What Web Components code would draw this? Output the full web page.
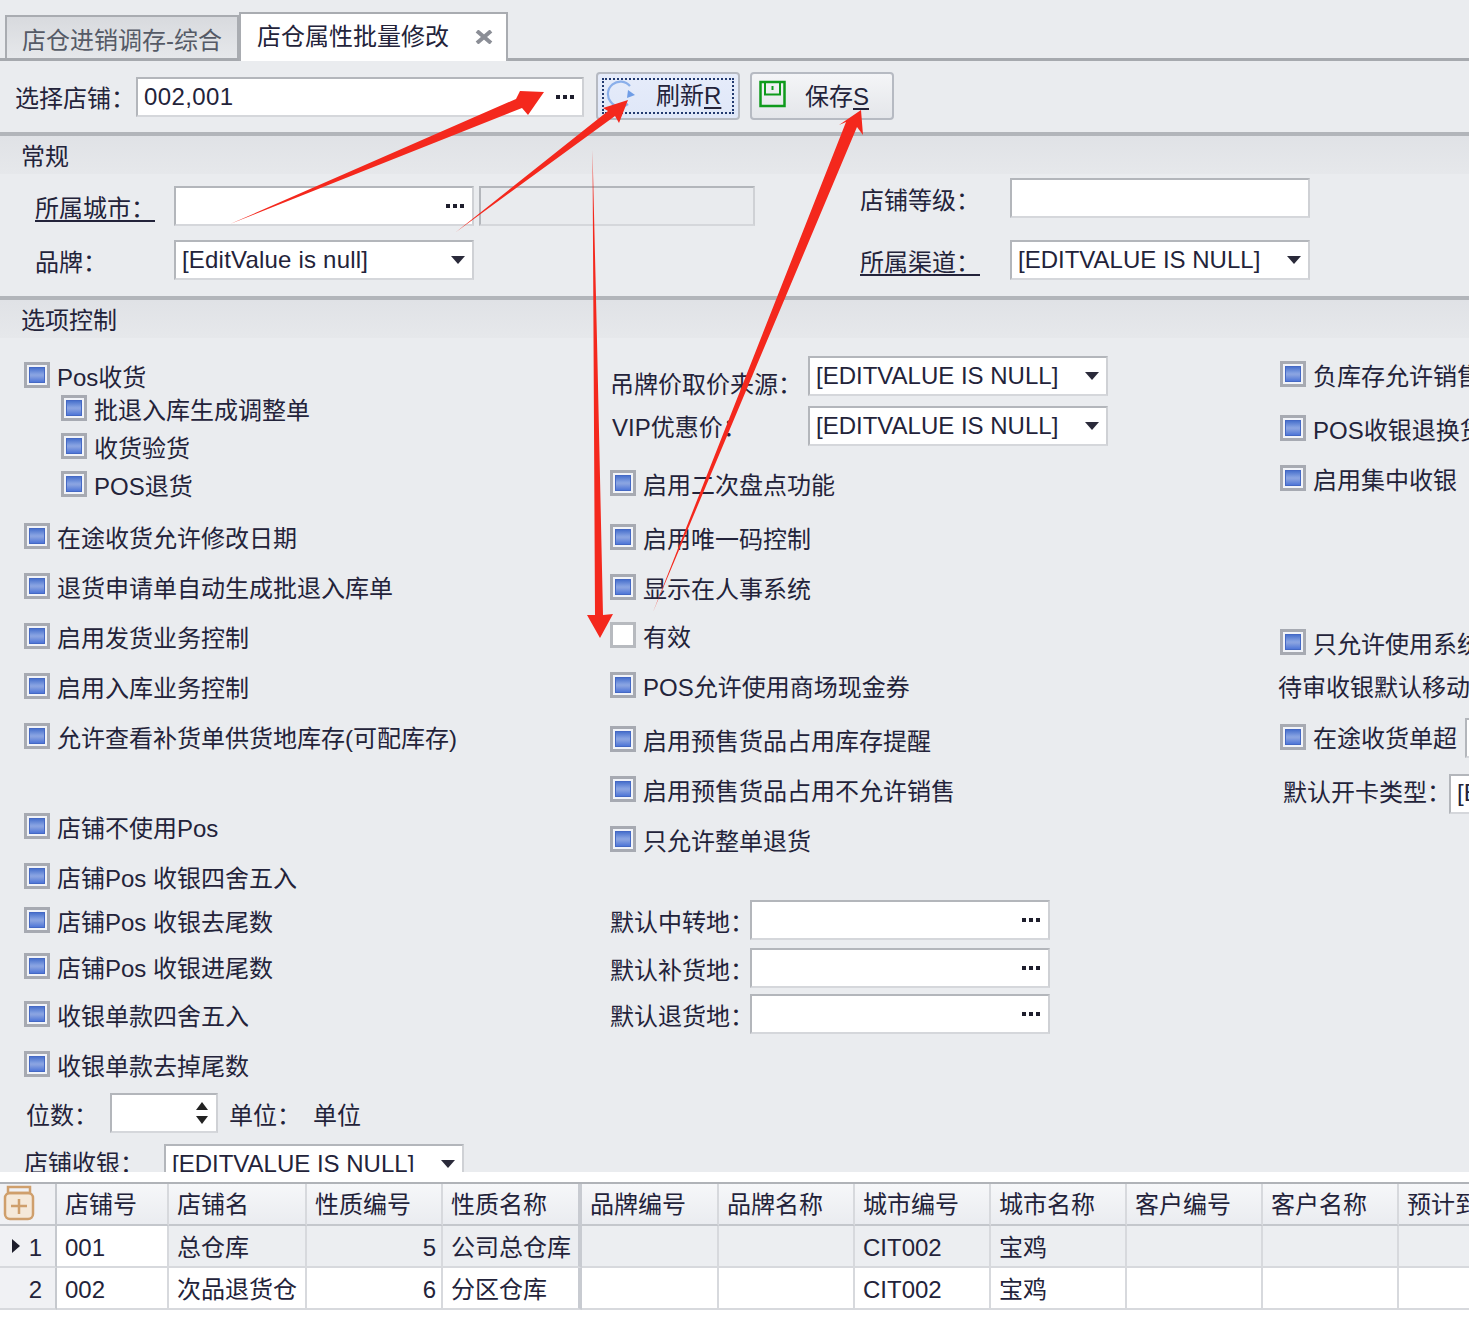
<!DOCTYPE html>
<html lang="zh">
<head>
<meta charset="utf-8">
<title>店仓属性批量修改</title>
<style>
  html, body { margin: 0; height: 100%; }
  body {
    width: 1469px; height: 1341px; overflow: hidden; position: relative;
    background: #eaecef; color: #23233a;
    font: 24px/1.2 "Liberation Sans", "Noto Sans CJK SC", sans-serif;
  }
  .cols { display: flex; height: 834px; overflow: hidden; }
  .col { flex: none; display: flex; flex-direction: column; align-items: flex-start; }
  .col1 { width: 610px; padding: 25px 0 0 24px; box-sizing: border-box; }
  .col2 { width: 670px; padding-top: 18px; }
  .col3 { width: 189px; padding-top: 24px; white-space: nowrap; }
  .row { display: flex; align-items: center; white-space: nowrap; }
  .h40 { height: 40px; }
  .general { display: flex; height: 122px; }
  .lb { padding-top: 6px; }
  u { text-underline-offset: 3px; }
</style>
</head>
<body>

<template id="t-tabs">
  <style>
    :host { display: flex; height: 61px; box-sizing: border-box; padding: 12px 0 0 5px; border-bottom: 3px solid #a6a9ae; align-items: flex-end; }
    .tab { box-sizing: border-box; display: flex; align-items: center; white-space: nowrap; border: 2px solid #a9acb1; border-bottom: 0; }
    .off { width: 234px; height: 43px; padding: 8px 0 0 15px; background: linear-gradient(#d8dade, #e6e8eb); color: #555a66; }
    .on { width: 269px; height: 49px; margin-bottom: -3px; padding: 3px 0 3px 16px; background: #fff; position: relative; }
    svg { position: absolute; left: 234px; top: 16px; }
  </style>
  <div class="tab off">店仓进销调存-综合</div>
  <div class="tab on">店仓属性批量修改
    <svg width="18" height="14" viewBox="0 0 18 14"><path d="M2 1 16 13M16 1 2 13" stroke="#8b8e96" stroke-width="4"/></svg>
  </div>
</template>

<template id="t-button">
  <style>
    :host { display: flex; align-items: center; box-sizing: border-box; height: 48px; border: 2px solid #b6bac2; border-radius: 4px; background: linear-gradient(#f4f5f7, #e4e6ea); white-space: nowrap; }
    :host([focus]) { background: linear-gradient(#e6ecfa, #dfe7f8); }
    .in { flex: 1; display: flex; align-items: center; height: 36px; margin: 0 4px; padding-top: 4px; box-sizing: border-box; }
    :host([focus]) .in { border: 2px dotted #223a70; padding-top: 2px; }
    .ico { width: 30px; height: 30px; flex: none; margin-right: var(--ico-gap, 22px); }
    ::slotted(svg) { display: block; }
  </style>
  <div class="in"><span class="ico"><slot name="icon"></slot></span><slot></slot></div>
</template>

<template id="t-group">
  <style>
    :host { display: block; box-sizing: border-box; height: 42px; border-top: 4px solid #b2b5ba; padding: 4px 0 0 21px; background: linear-gradient(#e0e2e6, #e6e8eb); line-height: 34px; }
  </style>
  <slot></slot>
</template>

<template id="t-edit">
  <style>
    :host { display: flex; align-items: center; flex: none; box-sizing: border-box; height: 40px; background: #fff; border: 2px solid #b3b6bb; border-bottom-color: #d5d7db; border-right-color: #cfd1d5; padding: 0 6px; white-space: nowrap; overflow: hidden; }
    :host([disabled]) { background: #e9ebee; }
    .val { flex: 1; }
    .dots { display: flex; gap: 3px; margin-right: 2px; }
    .dots i { width: 4px; height: 4px; background: #1e1e2c; display: block; }
    .drop { display: block; width: 0; height: 0; border: 7px solid transparent; border-top: 8px solid #2a2a3a; border-bottom: 0; margin-right: 1px; }
    .spin { display: flex; flex-direction: column; gap: 6px; margin-right: 2px; }
    .spin i { display: block; width: 0; height: 0; border: 6px solid transparent; border-bottom: 8px solid #222; border-top: 0; }
    .spin i + i { border-top: 8px solid #222; border-bottom: 0; }
  </style>
  <span class="val"><slot></slot></span><span id="btn"></span>
</template>

<template id="t-check">
  <style>
    :host { display: flex; align-items: center; height: 26px; white-space: nowrap; }
    .box { box-sizing: border-box; width: 26px; height: 26px; flex: none; border: 3px solid #a7aab2; padding: 2px; background: #f1f3f8; margin-right: 7px; margin-top: -2px; }
    .box i { display: block; height: 100%; background: linear-gradient(#3f69c9, #86a2e2 45%, #8aa3e0 55%, #466fd6); box-shadow: inset 0 0 0 1px #4468c4; }
    :host([off]) .box i { background: #fff; box-shadow: none; }
    :host([off]) .box { border-color: #b7babf; background: #fff; }
    .txt { padding-top: 4px; }
  </style>
  <span class="box"><i></i></span><span class="txt"><slot></slot></span>
</template>

<template id="t-grid">
  <style>
    :host { display: block; position: absolute; left: 0; right: 0; top: 1172px; bottom: 0; background: #fff; padding-top: 10px; overflow: hidden; }
    .g { display: grid; grid-template-columns: 57px 112px 138px 136px 139px 137px repeat(6, 136px); border-top: 2px solid #b0b3b8; width: 1700px; }
    .c { box-sizing: border-box; height: 42px; line-height: 40px; padding: 2px 7px 0 8px; border-right: 2px solid #d7d9dd; border-bottom: 2px solid #d7d9dd; white-space: nowrap; overflow: hidden; color: #23233a; }
    .h { background: linear-gradient(#f6f7f9, #eaecf0); border-bottom-color: #c4c7cc; line-height: 38px; }
    .n { background: #f0f1f4; text-align: right; padding-right: 13px; border-right-color: #c6c9ce; position: relative; }
    .r { text-align: right; padding-right: 5px; }
    .s { background: #eceef1; }
    .fz { border-right: 4px solid #c8cbd1; }
    .mark { position: absolute; left: 12px; top: 13px; width: 0; height: 0; border: 7px solid transparent; border-left: 8px solid #1d1d2b; border-right: 0; }
    svg { display: block; margin-top: 1px; }
    .corner { padding: 0 0 0 3px; }
  </style>
  <div class="g" id="g"></div>
</template>

<div id="app">
  <shop-tabs></shop-tabs>
  <div class="row" style="height:71px;padding-left:15px;box-sizing:border-box">
    <span class="lb" style="width:121px">选择店铺：</span>
    <shop-edit btn="dots" style="width:448px;margin-top:1px;letter-spacing:.4px">002,001</shop-edit>
    <shop-button focus style="width:144px;margin:-2px 0 0 12px">
      <svg slot="icon" width="34" height="30" viewBox="0 0 34 30" fill="none" style="margin-top:-2px"><path d="M26 6A12.5 12.5 0 1 0 24 24" stroke="#8aafea" stroke-width="2.2"/><path d="M24 10l7 5-8 3z" fill="#6f9de6"/></svg>
      <span>刷新<u>R</u></span>
    </shop-button>
    <shop-button style="width:144px;margin:-2px 0 0 10px;--ico-gap:19px">
      <svg slot="icon" width="30" height="30" viewBox="0 0 30 30" fill="none" style="margin:-3px 0 0 3px"><path d="M1.5 2h24v24h-24z" stroke="#0f9b1c" stroke-width="2.5"/><path d="M6 2v12.5h15V2M13.5 6v4" stroke="#0f9b1c" stroke-width="2"/></svg>
      <span>保存<u>S</u></span>
    </shop-button>
  </div>

  <shop-group>常规</shop-group>
  <div class="general">
    <div class="col" style="width:860px;padding:12px 0 0 35px;box-sizing:border-box">
      <div class="row">
        <u class="lb" style="width:121px">所属城市：</u>
        <shop-edit btn="dots" style="width:300px;margin-left:18px">&nbsp;</shop-edit>
        <shop-edit disabled style="width:276px;margin-left:5px">&nbsp;</shop-edit>
      </div>
      <div class="row" style="margin-top:14px">
        <span class="lb" style="width:139px">品牌：</span>
        <shop-edit btn="drop" style="width:300px;letter-spacing:.2px">[EditValue is null]</shop-edit>
      </div>
    </div>
    <div class="col" style="padding-top:4px">
      <div class="row">
        <span class="lb" style="width:150px">店铺等级：</span>
        <shop-edit style="width:300px">&nbsp;</shop-edit>
      </div>
      <div class="row" style="margin-top:22px">
        <u class="lb" style="width:150px">所属渠道：</u>
        <shop-edit btn="drop" style="width:300px">[EDITVALUE IS NULL]</shop-edit>
      </div>
    </div>
  </div>

  <shop-group>选项控制</shop-group>
  <div class="cols">
    <div class="col col1">
      <shop-check>Pos收货</shop-check>
      <shop-check style="margin:7px 0 0 37px">批退入库生成调整单</shop-check>
      <shop-check style="margin:12px 0 0 37px">收货验货</shop-check>
      <shop-check style="margin:12px 0 0 37px">POS退货</shop-check>
      <shop-check style="margin-top:26px">在途收货允许修改日期</shop-check>
      <shop-check style="margin-top:24px">退货申请单自动生成批退入库单</shop-check>
      <shop-check style="margin-top:24px">启用发货业务控制</shop-check>
      <shop-check style="margin-top:24px">启用入库业务控制</shop-check>
      <shop-check style="margin-top:24px">允许查看补货单供货地库存(可配库存)</shop-check>
      <shop-check style="margin-top:64px">店铺不使用Pos</shop-check>
      <shop-check style="margin-top:24px">店铺Pos 收银四舍五入</shop-check>
      <shop-check style="margin-top:18px">店铺Pos 收银去尾数</shop-check>
      <shop-check style="margin-top:20px">店铺Pos 收银进尾数</shop-check>
      <shop-check style="margin-top:22px">收银单款四舍五入</shop-check>
      <shop-check style="margin-top:24px">收银单款去掉尾数</shop-check>
      <div class="row h40" style="margin-top:15px">
        <span class="lb" style="width:84px;margin-left:2px">位数：</span>
        <shop-edit btn="spin" style="width:108px">&nbsp;</shop-edit>
        <span class="lb" style="margin-left:11px;width:84px">单位：</span><span class="lb">单位</span>
      </div>
      <div class="row" style="margin-top:11px">
        <span style="width:140px">店铺收银：</span>
        <shop-edit btn="drop" style="width:300px">[EDITVALUE IS NULL]</shop-edit>
      </div>
    </div>
    <div class="col col2">
      <div class="row h40"><span style="width:198px;padding-top:18px">吊牌价取价来源：</span><shop-edit btn="drop" style="width:300px">[EDITVALUE IS NULL]</shop-edit></div>
      <div class="row h40" style="margin-top:10px"><span style="width:196px;padding:4px 0 0 2px">VIP优惠价：</span><shop-edit btn="drop" style="width:300px">[EDITVALUE IS NULL]</shop-edit></div>
      <shop-check style="margin-top:25px">启用二次盘点功能</shop-check>
      <shop-check style="margin-top:28px">启用唯一码控制</shop-check>
      <shop-check style="margin-top:24px">显示在人事系统</shop-check>
      <shop-check off style="margin-top:22px">有效</shop-check>
      <shop-check style="margin-top:24px">POS允许使用商场现金券</shop-check>
      <shop-check style="margin-top:28px">启用预售货品占用库存提醒</shop-check>
      <shop-check style="margin-top:24px">启用预售货品占用不允许销售</shop-check>
      <shop-check style="margin-top:24px">只允许整单退货</shop-check>
      <div class="row" style="margin-top:47px"><span class="lb" style="width:140px">默认中转地：</span><shop-edit btn="dots" style="width:300px">&nbsp;</shop-edit></div>
      <div class="row" style="margin-top:8px"><span class="lb" style="width:140px">默认补货地：</span><shop-edit btn="dots" style="width:300px">&nbsp;</shop-edit></div>
      <div class="row" style="margin-top:6px"><span class="lb" style="width:140px">默认退货地：</span><shop-edit btn="dots" style="width:300px">&nbsp;</shop-edit></div>
    </div>
    <div class="col col3">
      <shop-check>负库存允许销售</shop-check>
      <shop-check style="margin-top:28px">POS收银退换货</shop-check>
      <shop-check style="margin-top:24px">启用集中收银</shop-check>
      <shop-check style="margin-top:138px">只允许使用系统</shop-check>
      <span style="margin:18px 0 0 -2px">待审收银默认移动仓</span>
      <div class="row" style="margin-top:15px"><shop-check>在途收货单超</shop-check><shop-edit style="width:30px;margin-left:8px;height:40px">&nbsp;</shop-edit></div>
      <div class="row" style="margin:16px 0 0 3px"><span style="width:166px">默认开卡类型：</span><shop-edit style="width:60px">[EDITVALUE IS NULL]</shop-edit></div>
    </div>
  </div>
</div>

<shop-grid></shop-grid>

<svg id="arrows" width="1469" height="1341" viewBox="0 0 1469 1341" style="position:absolute;left:0;top:0;pointer-events:none" fill="#f4281d">
  <path d="M230 224 516 99 520 91 544 92 528 115 522 108Z"/>
  <path d="M456 232 608 111 603 108 628 100 619 123 615 116Z"/>
  <path d="M653 612 846 122 839 125 861 110 863 135 857 127Z"/>
  <path d="M592.5 150 595 615 587 615 600 638 613 614 603 615 597 340Z"/>
</svg>

<script>
  function base(id) {
    return class extends HTMLElement {
      constructor() {
        super();
        this.attachShadow({ mode: 'open' });
        this.shadowRoot.appendChild(document.getElementById(id).content.cloneNode(true));
      }
    };
  }

  customElements.define('shop-tabs', base('t-tabs'));
  customElements.define('shop-button', base('t-button'));
  customElements.define('shop-group', base('t-group'));
  customElements.define('shop-check', base('t-check'));

  class ShopEdit extends base('t-edit') {
    connectedCallback() {
      const btn = this.shadowRoot.getElementById('btn');
      const tipo = this.getAttribute('btn');
      if (tipo === 'dots') btn.innerHTML = '<span class="dots"><i></i><i></i><i></i></span>';
      if (tipo === 'drop') btn.innerHTML = '<span class="drop"></span>';
      if (tipo === 'spin') btn.innerHTML = '<span class="spin"><i></i><i></i></span>';
    }
  }
  customElements.define('shop-edit', ShopEdit);

  class ShopGrid extends base('t-grid') {
    connectedCallback() {
      const heads = ['店铺号', '店铺名', '性质编号', '性质名称', '品牌编号', '品牌名称', '城市编号', '城市名称', '客户编号', '客户名称', '预计到货'];
      const rows = [
        ['1', '001', '总仓库', '5', '公司总仓库', '', '', 'CIT002', '宝鸡', '', '', ''],
        ['2', '002', '次品退货仓', '6', '分区仓库', '', '', 'CIT002', '宝鸡', '', '', '']
      ];
      let html = `<div class="c h n corner"><svg width="32" height="36" viewBox="0 0 32 36" fill="none" stroke="#cf9f6c" stroke-width="2.5"><rect x="2" y="8" width="28" height="26" rx="5" fill="#f5e9da"/><path d="M5 2h22v6H5zM16 14v15M8 21h16"/></svg></div>`;
      heads.forEach((h, i) => { html += `<div class="c h ${i === 3 ? 'fz' : ''}">${h}</div>`; });
      rows.forEach((r, ri) => {
        r.forEach((v, i) => {
          let cls = 'c';
          if (i === 0) cls += ' n';
          if (i === 3) cls += ' r';
          if (i === 4) cls += ' fz';
          if (ri === 0 && i > 1) cls += ' s';
          html += `<div class="${cls}">${ri === 0 && i === 0 ? '<span class="mark"></span>' : ''}${v}</div>`;
        });
      });
      this.shadowRoot.getElementById('g').innerHTML = html;
    }
  }
  customElements.define('shop-grid', ShopGrid);
</script>
</body>
</html>
